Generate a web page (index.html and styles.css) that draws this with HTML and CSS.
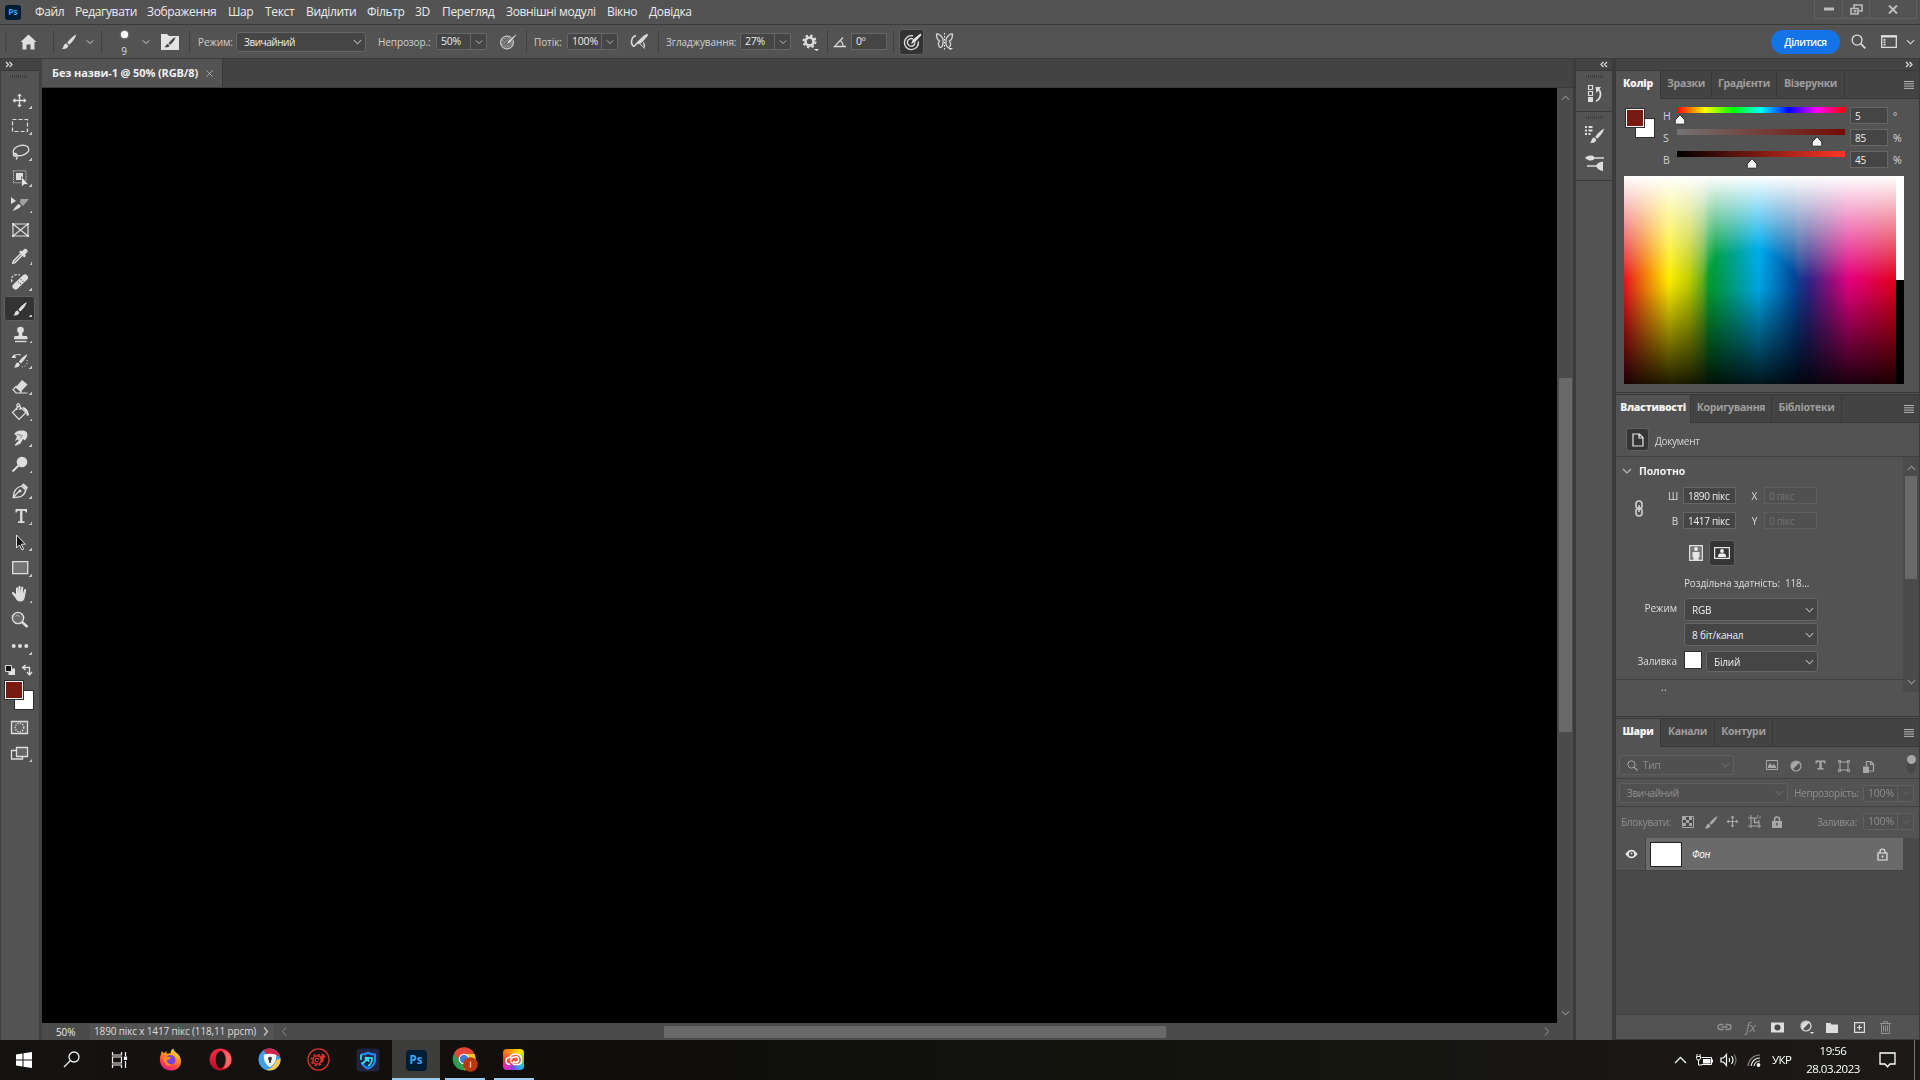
FILE: index.html
```html
<!DOCTYPE html>
<html lang="uk">
<head>
<meta charset="utf-8">
<title>Без назви-1 @ 50% (RGB/8)</title>
<link rel="stylesheet" href="styles.css">
</head>
<body>
<svg class="defs" width="0" height="0">
  <symbol id="chev" viewBox="0 0 10 6"><path d="M1 1l4 4 4-4" fill="none" stroke="currentColor" stroke-width="1.2"/></symbol>
  <symbol id="brush" viewBox="0 0 16 16"><path d="M15.3 1C12 2.500 8 6.500 6.300 9.300l1.800 1.900C11 9 14.500 4.500 15.300 1zM5.500 10c-2 .2-2.700 1.500-3 3-.2 1-.8 1.700-1.700 2.100 2.500.7 5.900.2 6.500-2.800z" fill="currentColor"/></symbol>
  <symbol id="move" viewBox="0 0 16 16"><path d="M8 .5l2.600 3H8.700v3.800h3.800V5.400l3 2.600-3 2.600V8.700H8.700v3.800h1.900L8 15.500l-2.600-3h1.900V8.700H3.500v1.900L.5 8l3-2.600v1.900h3.800V3.500H5.400z" fill="currentColor"/></symbol>
  <symbol id="hamb" viewBox="0 0 10 8"><path d="M0 .5h10M0 2.800h10M0 5.100h10M0 7.400h10" stroke="currentColor"/></symbol>
  <symbol id="adj" viewBox="0 0 12 12"><circle cx="6" cy="6" r="5" fill="none" stroke="currentColor" stroke-width="1.2"/><path d="M9.500 2.500A5 5 0 0 0 2.500 9.500z" fill="currentColor"/></symbol>
  <symbol id="lens" viewBox="0 0 16 16"><circle cx="6.500" cy="6.500" r="5.300" fill="none" stroke="currentColor" stroke-width="1.400"/><path d="M10.300 10.300l5 5" stroke="currentColor" stroke-width="1.800"/></symbol>
  <symbol id="handle" viewBox="0 0 12 11"><path d="M6 .7L10.800 6v3.200q0 1-1 1H2.200q-1 0-1-1V6z" fill="#f4f4f4" stroke="#2b2b2b"/></symbol>
</svg>

<div class="app">
  <header class="menubar">
    <span class="ps-badge">Ps</span>
    <span>Файл</span><span>Редагувати</span><span>Зображення</span><span>Шар</span><span>Текст</span><span>Виділити</span><span>Фільтр</span><span>3D</span><span>Перегляд</span><span>Зовнішні модулі</span><span>Вікно</span><span>Довідка</span>
    <div class="winbtns">
      <i><svg width="10" height="4"><path d="M0 2h10" stroke="#bdbdbd" stroke-width="3"/></svg></i>
      <i><svg width="13" height="11" fill="none" stroke="#bdbdbd" stroke-width="1.600"><path d="M4 4V1h8v6H9"/><path d="M1 4.500h7V10H1z"/><path d="M4 6.500h2v1.500H4z" stroke-width="1"/></svg></i>
      <i><svg width="10" height="9"><path d="M1 .5l8 8M9 .5l-8 8" stroke="#bdbdbd" stroke-width="2"/></svg></i>
    </div>
  </header>

  <div class="options">
    <i class="vgrip"></i>
    <svg class="ic" width="17" height="16"><path d="M8.500.5L16.500 8H14.500v7.500h-4v-5h-4v5h-4V8H.5z" fill="#dedede"/></svg>
    <i class="sep"></i>
    <svg class="ic" width="16" height="17"><use href="#brush"/></svg>
    <svg class="ic chev" width="8" height="6"><use href="#chev"/></svg>
    <i class="sep"></i>
    <div class="tip"><b></b><span>9</span></div>
    <svg class="ic chev" width="8" height="6"><use href="#chev"/></svg>
    <svg class="ic" width="18" height="17"><path d="M0 1h6l2 2h10v14H0z" fill="#e3e3e3"/><path d="M14.500 4C11.500 5.500 9 8 7.500 10.500l1.500 1.300C11.500 10 14 7 14.500 4zM6.700 11c-2 .3-1.700 2.500-3.200 3 2 .7 4.700.2 4.900-1.600z" fill="#444"/></svg>
    <i class="sep"></i>
    <label>Режим:</label>
    <div class="select">Звичайний<svg width="9" height="6"><use href="#chev"/></svg></div>
    <label>Непрозор.:</label>
    <div class="num"><span>50%</span><i><svg width="8" height="6"><use href="#chev"/></svg></i></div>
    <svg class="ic" width="18" height="17"><circle cx="8" cy="9.500" r="6.500" fill="#898989" stroke="#d8d8d8"/><path d="M4 6l8 7M3 9l6 6M6 4l6 6M4 13l8-8M3 10l6-6" stroke="#555" stroke-width=".8"/><path d="M17 1l-8 7-1.500 3.500L11 10l6.500-8z" fill="#e3e3e3" stroke="#535353" stroke-width=".7"/></svg>
    <i class="sep"></i>
    <label>Потік:</label>
    <div class="num"><span>100%</span><i><svg width="8" height="6"><use href="#chev"/></svg></i></div>
    <svg class="ic" width="18" height="17"><path d="M6 2.500C1 4 0 11 4 13.500M4 13.500C7 10 11 6 15 2.500" fill="none" stroke="#d8d8d8" stroke-width="1.600"/><path d="M17 1L9.500 7.500 8 11l3.500-1.500 6-7zM10 11l5 4.500M13 9.500c2 1 2 3 1 5" fill="#d8d8d8" stroke="#d8d8d8" stroke-width="1"/></svg>
    <i class="sep"></i>
    <label>Згладжування:</label>
    <div class="num"><span>27%</span><i><svg width="8" height="6"><use href="#chev"/></svg></i></div>
    <svg class="ic" width="18" height="20"><circle cx="7.500" cy="9.500" r="4" fill="none" stroke="#dedede" stroke-width="2.600"/><circle cx="7.500" cy="9.500" r="6" fill="none" stroke="#dedede" stroke-width="2" stroke-dasharray="2.400 2.312"/><path d="M12 17h5l-2.500 2z" fill="#eee"/></svg>
    <i class="sep"></i>
    <svg class="ic" width="14" height="12"><path d="M10 1.500L1.500 10.500H13M7 4.500c2 1 3 3 3 6" fill="none" stroke="#d6d6d6" stroke-width="1.300"/></svg>
    <div class="num plain"><span>0º</span></div>
    <i class="sep"></i>
    <div class="press"><svg width="20" height="20"><path d="M11 3.800a7 7 0 1 0 5.300 5.500M11 7a3.800 3.800 0 1 0 2 3.500" fill="none" stroke="#dedede" stroke-width="1.400"/><path d="M18.500 1.500l-7.500 6-2 4.500 4-2 6.500-7z" fill="#e8e8e8"/></svg></div>
    <svg class="ic" width="20" height="19"><path d="M8 7C6 3 3 1.500 1.500 2c0 3 1 6 3 7-2 2-1 6 1 6.500C7 15 8 13 8 11zM11 7c2-4 5-5.500 6.500-5 0 3-1 6-3 7 2 2 1 6-1 6.500C12 15 11 13 11 11z" fill="none" stroke="#d6d6d6" stroke-width="1.300"/><path d="M9.500 1v17" stroke="#eee" stroke-dasharray="1.500 1.500"/><path d="M13 16h5l-2.500 2z" fill="#eee"/></svg>
    <button class="share">Ділитися</button>
    <svg class="ic" width="15" height="15"><use href="#lens"/></svg>
    <svg class="ic" width="16" height="13" fill="none" stroke="#dedede"><path d="M.7 1h14.600v11.300H.7z" stroke-width="1.300"/><path d="M0 1.500h16" stroke-width="2"/><path d="M3.500 4v6.500" stroke-width="2" stroke-dasharray="1.700 .7"/></svg>
    <svg class="ic chev" width="9" height="6"><use href="#chev"/></svg>
  </div>

  <main class="work">
    <aside class="tools">
      <div class="strip"><svg width="8" height="7"><path d="M1 1l2.500 2.500L1 6M4.500 1L7 3.500 4.500 6" fill="none" stroke="#ddd" stroke-width="1.200"/></svg></div>
      <div class="grip"></div>
      <div class="toollist">
        <svg><use href="#move" x="10" y="5" width="15" height="15"/></svg>
        <svg><path d="M10.500 5.500h15v12h-15z" fill="none" stroke="#dedede" stroke-width="1.200" stroke-dasharray="4 2"/></svg>
        <svg><g fill="none" stroke="#dedede" stroke-width="1.300"><ellipse cx="19" cy="10.500" rx="8" ry="5" transform="rotate(-14 19 10.500)"/><path d="M12 13.500c2.500-.5 4 1.500 2 2.500s-3.500-1-2-2.500M15 15.500c.5 2 0 3-1 4"/></g></svg>
        <svg><path d="M11.500 4.800h12.500v12H11.500z" fill="none" stroke="#dedede" stroke-dasharray="1 1"/><path d="M14 7h7v5l-1 2h-6z" fill="#dedede"/><path d="M19.500 10.500v10.500l2.500-2.500h4.500z" fill="#e6e6e6" stroke="#535353" stroke-width=".7"/></svg>
        <svg><path d="M9 5l5 4-5 3z" fill="#dedede"/><path d="M10 19c2-1 3-5 7-7l2 2c-2 3-6 4-9 5z" fill="#dedede"/><path d="M18.500 7H27l-6 7-3-3z" fill="#a0a0a0"/></svg>
        <svg class="nc"><path d="M11 6h15v12H11zM11 6l15 12M26 6L11 18" fill="none" stroke="#dedede" stroke-width="1.200"/><path d="M10 5h2v2h-2zM25 5h2v2h-2zM10 17h2v2h-2zM25 17h2v2h-2z" fill="#dedede"/></svg>
        <svg><path d="M19 9.500l-7.500 7.500-.7 2.200 2.200-.7L20.500 11" fill="none" stroke="#dedede" stroke-width="1.500"/><path d="M17 8l1.500-1.500 1.700.8 2-2.300c1.500-1 4.200 1 3.300 3l-2.400 2.200.8 1.800-1.700 1.500z" fill="#dedede"/></svg>
        <svg><path d="M13.500 16.500L23 7.500" stroke="#dedede" stroke-width="6" stroke-linecap="round"/><path d="M16 11.500l5 4M18.500 9l4 4" stroke="#535353" stroke-width="1" stroke-dasharray="1.500 1"/><path d="M10 12C8 6 13 3.500 18 5" fill="none" stroke="#dedede" stroke-width="1.200" stroke-dasharray="2.500 1.500"/></svg>
        <svg class="on"><use href="#brush" x="8.500" y="4.500" width="15" height="16"/></svg>
        <svg><circle cx="18.500" cy="8" r="3.300" fill="#dedede"/><path d="M17 10h3l.5 4h4q1 0 1 3.300H12q0-3.300 1-3.300h3.500z" fill="#dedede"/><path d="M13 19.500h11.500" stroke="#dedede" stroke-width="1.300"/></svg>
        <svg><use href="#brush" x="11" y="4.500" width="15" height="16"/><path d="M10 9c3-2.500 6-3 9-2" fill="none" stroke="#dedede"/><path d="M9.500 10l3-4 1.500 4z" fill="#dedede"/><path d="M25 12c1 4-2 7-6 7" fill="none" stroke="#dedede" stroke-dasharray="1 2"/></svg>
        <svg><path d="M20 6l5.500 4.500-7 7.500-5-4.500z" fill="#dedede"/><path d="M14.500 12l-3.500 3.500 3 3.500h4l1.500-2M14 19h11.500" fill="none" stroke="#dedede" stroke-width="1.200"/></svg>
        <svg><path d="M17 6l-6.500 6.500 6.500 7 7-7zM15 10V4.500q2-2 3 1V10" fill="none" stroke="#dedede" stroke-width="1.200"/><path d="M20 7c4 0 6 3 7 7.500-.5 2-3 1.500-2.500-.5 0-2-1-3-2-3.500z" fill="#dedede"/></svg>
        <svg><path d="M12.500 8c1-3 5-3.500 7.500-3.500 4 0 6 2 5.300 6-.3 1.500-1.500 2.500-2.300 4L21 13l-2.500 4.500-4.500 2.300-1.500-.5L17 14l-1.500-.5-2.500 1.500 2-4.500z" fill="#dedede"/><path d="M15 8.500l4.500 1M18 12.500l2.500-3" stroke="#666" stroke-width=".8"/></svg>
        <svg><circle cx="20" cy="10" r="5.300" fill="#dedede"/><path d="M16.500 13.500L10.500 19.500" stroke="#dedede" stroke-width="2"/></svg>
        <svg><path d="M11.300 19.500c0-5 1-9.500 8-11.500l4.500 4c-1.500 6-5 7.500-12.500 7.500zM11.500 19l6-6" fill="none" stroke="#dedede" stroke-width="1.300"/><circle cx="18" cy="13" r="1.400" fill="#dedede"/><path d="M19.500 7l2-1.800L26 9.500l-1.500 2.300z" fill="#dedede"/></svg>
        <svg><path d="M13.500 5h11.500v3.500h-1.200q-.3-1.800-1.500-1.800h-1.900v10.500h2.100V19H16v-1.800h2.100V6.700h-1.900q-1.200 0-1.500 1.800h-1.200z" fill="#dedede"/></svg>
        <svg><path d="M14.500 5v13l3-3 2.500 5 1.700-.8-2.400-5h4z" fill="#151515" stroke="#e3e3e3"/></svg>
        <svg><path d="M10.700 5.700h15v12h-15z" fill="#757575" stroke="#dedede" stroke-width="1.300"/></svg>
        <svg><path d="M13.500 16L10 11.500c-.5-1.500 1-2 2-1l2 1.800V6q1.200-1.500 2 0v4.500l.5-6q1-1.300 2 0v6l.8-5.500q1-1 1.900.2l-.3 6 1.500-4q1.400-.7 1.800.6L23 14c-.5 4-2 5.500-4.500 5.500S14.500 18.500 13.500 16z" fill="#dedede"/></svg>
        <svg class="nc"><circle cx="16" cy="10" r="5.600" fill="#6b6b6b" stroke="#dedede" stroke-width="1.400"/><path d="M20 14l5.500 5" stroke="#dedede" stroke-width="2.400"/><path d="M13 8.500q2-2.500 5 0" fill="none" stroke="#aaa"/></svg>
        <svg><g fill="#dedede"><circle cx="11.700" cy="12" r="2"/><circle cx="18" cy="12" r="2"/><circle cx="24.300" cy="12" r="2"/></g></svg>
      </div>
      <svg class="swap" width="36" height="16"><path d="M6.500 8.500h6.500v6.500H6.500z" fill="#e3e3e3"/><path d="M3.500 5.500h6v6h-6z" fill="#151515" stroke="#d8d8d8"/><path d="M21 7.500h6.500V14M23.500 5L20.500 7.500l3 2.500M25 12l2.500 3 2.500-3" fill="none" stroke="#dedede" stroke-width="1.300"/></svg>
      <div class="duo"><i class="bgc"></i><i class="fgc"></i></div>
      <svg class="qm" width="36" height="52" fill="none" stroke="#dedede" stroke-width="1.300"><path d="M9.500 9.500h16v12h-16z" fill="#666"/><circle cx="17.500" cy="15.500" r="4.300" stroke-dasharray="1.300 1.200"/><path d="M14.500 38.500H9.500v8.500h11v-2.500" /><path d="M14.500 35.500h11v9h-11z" fill="#666"/><path d="M30 47v3h-3z" fill="#c4c4c4" stroke="none"/></svg>
    </aside>

    <section class="doc">
      <div class="tabs"><div class="doctab">Без назви-1 @ 50% (RGB/8)<svg width="7" height="7"><path d="M.5.5l6 6M6.500.5l-6 6" stroke="#aaa"/></svg></div></div>
      <div class="canvas-row">
        <div class="canvas"></div>
        <div class="vscroll"><svg class="up" width="9" height="6"><use href="#chev"/></svg><i></i><svg width="9" height="6"><use href="#chev"/></svg></div>
      </div>
      <div class="status">
        <span class="zoom">50%</span>
        <span class="info">1890 пікс x 1417 пікс (118,11 ppcm)<svg width="6" height="9"><path d="M1 .5l3.500 4L1 8.500" fill="none" stroke="#ccc" stroke-width="1.200"/></svg></span>
        <svg class="l" width="6" height="9"><path d="M5 .5L1.500 4.500 5 8.500" fill="none" stroke="#8b8b8b"/></svg>
        <i class="hthumb"></i>
        <svg width="6" height="9"><path d="M1 .5l3.500 4L1 8.500" fill="none" stroke="#999"/></svg>
      </div>
    </section>

    <aside class="dock">
      <div class="strip r"><svg width="8" height="7"><path d="M3.500 1L1 3.500 3.500 6M7 1L4.500 3.500 7 6" fill="none" stroke="#ddd" stroke-width="1.200"/></svg></div>
      <div class="dockbox a"><div class="grip"></div>
        <svg width="16" height="18"><path d="M1.500 1.500h4v4h-4zM1.500 7.500h4v4h-4z" fill="none" stroke="#dedede" stroke-width="1.200"/><path d="M1 13h5v5H1z" fill="#dedede"/><path d="M9 17c5-2 6-9 2-12" fill="none" stroke="#dedede" stroke-width="1.800"/><path d="M8.500 3h5.500l-4.500 6z" fill="#dedede"/></svg>
      </div>
      <div class="dockbox b"><div class="grip"></div>
        <svg width="22" height="18"><path d="M1 1h2M4.500 1h4M1 4.500h2M4.500 4.500h4M1 8h2M4.500 8h2" stroke="#dedede" stroke-width="1.800"/><use href="#brush" x="4.500" y="1.500" width="17" height="16"/></svg>
        <svg width="22" height="18"><path d="M9 4h11M3 12h11" stroke="#dedede" stroke-width="1.500"/><path d="M1 4c3-3 7-3 9-1.500v3C7 7.500 4 6.500 1 4zM12 12c1-3 4-4 7-4.500v9.500c-3-.5-6-2-7-5z" fill="#dedede"/></svg>
      </div>
      <div class="dockfill"></div>
    </aside>

    <aside class="panels">
      <div class="strip r"><svg width="8" height="7"><path d="M1 1l2.500 2.500L1 6M4.500 1L7 3.500 4.500 6" fill="none" stroke="#ddd" stroke-width="1.200"/></svg></div>

      <section class="panel color">
        <nav class="ptabs t1"><b>Колір</b><span>Зразки</span><span>Градієнти</span><span>Візерунки</span><svg width="10" height="8"><use href="#hamb"/></svg></nav>
        <div class="hsb">
          <div class="duo"><i class="bgc"></i><i class="fgc"></i></div>
          <div class="sliders">
            <label>H</label><div class="bar h"><svg class="h1" width="12" height="11"><use href="#handle"/></svg></div><span class="val">5</span><em>º</em>
            <label>S</label><div class="bar s"><svg class="h2" width="12" height="11"><use href="#handle"/></svg></div><span class="val">85</span><em>%</em>
            <label>B</label><div class="bar b"><svg class="h3" width="12" height="11"><use href="#handle"/></svg></div><span class="val">45</span><em>%</em>
          </div>
        </div>
        <div class="ramp"><canvas id="ramp" width="272" height="208"></canvas><i></i></div>
      </section>

      <section class="panel props">
        <nav class="ptabs t2"><b>Властивості</b><span>Коригування</span><span>Бібліотеки</span><svg width="10" height="8"><use href="#hamb"/></svg></nav>
        <div class="dochead"><i><svg width="12" height="14"><path d="M1 1h6.500L11 4.500V13H1zM7 1v4h4" fill="none" stroke="#e6e6e6" stroke-width="1.200"/></svg></i><span>Документ</span></div>
        <div class="pbody">
          <div class="pleft">
            <div class="sect"><svg width="10" height="6"><use href="#chev"/></svg>Полотно</div>
            <div class="size">
              <svg class="link" width="10" height="17" fill="none" stroke="#d0d0d0" stroke-width="1.600"><path d="M2 6.500V4q0-3 3-3t3 3v2.500q0 1.500-1.500 1.500h-3Q2 8 2 6.500zM2 10.500V13q0 3 3 3t3-3v-2.500Q8 9 6.500 9h-3Q2 9 2 10.500z"/><path d="M5 5v7"/></svg>
              <label>Ш</label><span class="val">1890 пікс</span><label class="pos">X</label><span class="val off">0 пікс</span>
              <label>В</label><span class="val">1417 пікс</span><label class="pos">Y</label><span class="val off">0 пікс</span>
            </div>
            <div class="orient">
              <svg width="14" height="16"><path d="M.6.6h12.800v14.800H.6z" fill="#777" stroke="#dedede" stroke-width="1.200"/><circle cx="7" cy="4" r="1.900" fill="#eee"/><path d="M3.500 7h7v5l-1 .5V15h-5v-2.500l-1-.5z" fill="#e6e6e6"/></svg>
              <i><svg width="16" height="12"><path d="M.6.6h14.800v10.800H.6z" fill="none" stroke="#e6e6e6" stroke-width="1.200"/><circle cx="8" cy="4" r="1.900" fill="#eee"/><path d="M4 10q0-3.500 2-3.500h4q2 0 2 3.500z" fill="#eee"/></svg></i>
            </div>
            <div class="res">Роздільна здатність:<span>118...</span></div>
            <div class="form">
              <label>Режим</label><div class="select w">RGB<svg width="9" height="6"><use href="#chev"/></svg></div>
              <div class="select w">8 біт/канал<svg width="9" height="6"><use href="#chev"/></svg></div>
              <label class="fill">Заливка</label><i class="white"></i><div class="select f">Білий<svg width="9" height="6"><use href="#chev"/></svg></div>
            </div>
            <div class="cut">..</div>
          </div>
          <div class="pscroll"><svg class="up" width="9" height="6"><use href="#chev"/></svg><i></i><svg width="9" height="6"><use href="#chev"/></svg></div>
        </div>
      </section>

      <section class="panel layers">
        <nav class="ptabs t3"><b>Шари</b><span>Канали</span><span>Контури</span><svg width="10" height="8"><use href="#hamb"/></svg></nav>
        <div class="filter">
          <div class="select dim"><svg class="q" width="11" height="11"><use href="#lens"/></svg>Тип<svg width="9" height="6"><use href="#chev"/></svg></div>
          <svg width="12" height="10"><path d="M.5.5h11v9H.5z" fill="none" stroke="#a8a8a8"/><path d="M2 8V6l2-3 2 3 1.500-2L10 6.500V8z" fill="#a8a8a8"/></svg>
          <svg width="12" height="12"><use href="#adj"/></svg>
          <svg width="11" height="10"><path d="M.5.5h10v3H9.300Q9 2 8 2H6.700v6h1.800v1.500h-6V8h1.800V2H3Q2 2 1.700 3.500H.5z" fill="#a8a8a8"/></svg>
          <svg width="12" height="12" fill="none" stroke="#a8a8a8"><path d="M2 2h8v8H2z"/><path d="M.5.500h2v2h-2zM9.500.5h2v2h-2zM.5 9.500h2v2h-2zM9.500 9.500h2v2h-2z"/></svg>
          <svg width="12" height="13"><path d="M3.500 6V1.500h4.500L10.500 4v7H6M7.500 1.500v3h3" fill="none" stroke="#a8a8a8" stroke-width="1.200"/><path d="M0 6.500h6V13H0z" fill="#a8a8a8"/></svg>
          <div class="toggle"><i></i></div>
        </div>
        <div class="blend">
          <div class="select dim">Звичайний<svg width="9" height="6"><use href="#chev"/></svg></div>
          <label>Непрозорість:</label>
          <div class="num dim"><span>100%</span><i><svg width="8" height="6"><use href="#chev"/></svg></i></div>
        </div>
        <div class="lock">
          <label>Блокувати:</label>
          <svg width="12" height="12"><path d="M.5.500h11v11H.5z" fill="#4a4a4a" stroke="#a8a8a8"/><path d="M1 1h3v3H1zM7 1h3v3H7zM4 4h3v3H4zM1 7h3v3H1zM7 7h3v3H7z" fill="#a8a8a8"/></svg>
          <svg width="14" height="14"><use href="#brush"/></svg>
          <svg width="13" height="13"><use href="#move"/></svg>
          <svg width="14" height="13"><path d="M0 3h10M3 0v13M0 11h13M11 5v8M10 0v2M11 3l2-1" fill="none" stroke="#a8a8a8"/><path d="M6.500 3v4.500H11" fill="none" stroke="#a8a8a8" stroke-width="1.400"/></svg>
          <svg width="10" height="12"><path d="M2.500 5V3.500q0-2.500 2.500-2.500t2.500 2.500V5" fill="none" stroke="#a8a8a8" stroke-width="1.500"/><path d="M0 5h10v7H0z" fill="#a8a8a8"/><path d="M5 7v2.500" stroke="#555" stroke-width="1.500"/></svg>
          <label>Заливка:</label>
          <div class="num dim"><span>100%</span><i><svg width="8" height="6"><use href="#chev"/></svg></i></div>
        </div>
        <div class="list">
          <div class="layer">
            <div class="eye"><svg width="13" height="10"><path d="M.3 5q6.200-8.500 12.400 0-6.200 8.500-12.400 0z" fill="#e6e6e6"/><circle cx="6.500" cy="5" r="2.600" fill="#484848"/><circle cx="6.500" cy="4.500" r="1" fill="#e6e6e6"/></svg></div>
            <div class="row"><i></i><em>Фон</em><svg width="11" height="13"><path d="M3 5V3.500q0-2.500 2.500-2.500T8 3.500V5M1 5h9v7H1z" fill="none" stroke="#e6e6e6" stroke-width="1.200"/><path d="M5.500 7.500v2" stroke="#e6e6e6" stroke-width="1.500"/></svg></div>
          </div>
        </div>
        <div class="foot">
          <svg width="15" height="8" fill="none" stroke="#929292" stroke-width="1.400"><path d="M6.500 1.500h-3q-2.500 0-2.500 2.500t2.500 2.500h3M8.500 1.500h3q2.500 0 2.500 2.500t-2.500 2.500h-3M4.500 4h6"/></svg>
          <span class="fx">fx</span>
          <svg width="13" height="11"><path d="M0 .5h13v10H0z" fill="#dedede"/><circle cx="6.500" cy="5.500" r="3" fill="#484848"/></svg>
          <svg width="14" height="14"><use href="#adj" width="12" height="12"/><path d="M10 12h4l-2 2z" fill="#eee"/></svg>
          <svg width="12" height="11"><path d="M0 1h4.500l1 1.500H12V11H0z" fill="#dedede"/></svg>
          <svg width="11" height="11" fill="none" stroke="#dedede"><path d="M.6.600h9.800v9.800H.6z" stroke-width="1.200"/><path d="M5.500 3v5M3 5.500h5" stroke-width="1.200"/></svg>
          <svg width="11" height="13" fill="none" stroke="#929292"><path d="M0 2.500h11M3.500 2V.7h4V2M1.500 3v9.500h8V3M3.500 4.500v6M5.500 4.500v6M7.500 4.500v6"/></svg>
        </div>
      </section>
    </aside>
  </main>
</div>

<footer class="taskbar">
  <div class="tk"><svg width="16" height="16" fill="#fff"><path d="M0 2.500l6.500-1v6H0zM7.500 1.300L16 0v7.500H7.500zM0 8.500h6.500v6L0 13.500zM7.500 8.500H16V16l-8.500-1.300z"/></svg></div>
  <div class="tk"><svg width="18" height="17" fill="none" stroke="#f0f0f0" stroke-width="1.300"><circle cx="11" cy="6" r="5"/><path d="M7.500 9.500L1 16"/></svg></div>
  <div class="tk"><svg width="17" height="16" fill="none" stroke="#f0f0f0" stroke-width="1.200"><path d="M1.500 0v3h9V0M1.500 5h9v6h-9zM1.500 16v-3h9v3M14.500 0v4M14.500 9v7"/><path d="M13.500 5h2v2.500h-2z" fill="#fff"/></svg></div>
  <div class="tk"><svg width="23" height="23" viewBox="0 0 24 24"><defs><linearGradient id="ff" x1=".8" y1="0" x2=".3" y2="1"><stop offset="0" stop-color="#fff44f"/><stop offset=".35" stop-color="#ffa31a"/><stop offset=".7" stop-color="#ff4a3d"/><stop offset="1" stop-color="#e5178f"/></linearGradient></defs><path d="M1 13C.500 9 2 7 3 3l2 2.500 3-2v2.500l4-.5C12 3 13.500 1.500 15 .5c0 3 3 4 5 6 6 7 2.500 17-7.500 17C6 23.500 1.500 19 1 13z" fill="url(#ff)"/><circle cx="12" cy="12.500" r="5.300" fill="#7a3fe0"/><path d="M4 11q3-3 9-1-2 3-5 2.500Q9 18 15 17q-8 5-11-6z" fill="#ff8b25"/></svg></div>
  <div class="tk"><svg width="23" height="23" viewBox="0 0 24 24"><defs><linearGradient id="op" x2="0" y2="1"><stop stop-color="#ff2a45"/><stop offset="1" stop-color="#b60a24"/></linearGradient></defs><circle cx="12" cy="12" r="11.500" fill="url(#op)"/><path d="M14 2.500a9.500 9.500 0 0 1 0 19q4-3 4-9.500t-4-9.500z" fill="#ff6a66"/><ellipse cx="12" cy="12" rx="5" ry="9" fill="#14110e"/></svg></div>
  <div class="tk"><svg width="23" height="23" viewBox="0 0 24 24"><circle cx="12" cy="12" r="11.500" fill="#3f9fe8"/><path d="M6 2.200A11.500 11.500 0 0 1 23.500 12q-.500-4-5.500-5H9z" fill="#d3234a"/><path d="M23.500 11A11.500 11.500 0 0 1 8 22.700q8-1 11-10z" fill="#ffc845"/><path d="M6 7q6-2 13 0 .5 9-6.500 13Q5.500 16 6 7z" fill="#f5f5f5"/><circle cx="12.500" cy="11" r="2" fill="#333"/><path d="M11.500 11.500h2v4h-2z" fill="#333"/></svg></div>
  <div class="tk"><svg width="23" height="23" viewBox="0 0 24 24" fill="none" stroke="#d8342f"><circle cx="12" cy="12" r="11" stroke-width="1.300"/><circle cx="10.500" cy="12.500" r="4.300" stroke-width="1.500"/><circle cx="10.500" cy="12.500" r="5.700" stroke-width="1.800" stroke-dasharray="2.200 2.280"/><path d="M12.500 12.500a2 2 0 1 0-1 1.700" stroke-width="1.300"/><path d="M16.500 5.500l3.500 4.500h-2.300q0 4.500-3.200 6-.5-3 .5-6h-2z" fill="#d8342f" stroke="none"/></svg></div>
  <div class="tk"><svg width="24" height="24"><rect x=".5" y=".5" width="23" height="23" rx="4" fill="#232340"/><path d="M5 6.500q4 0 7-1.800 3 1.800 7 1.800v6.500q-1 5-7 7.500-5-2.500-6.500-6" fill="none" stroke="#2388f2" stroke-width="2.200"/><path d="M5 12V6.500M12 18q4-2 4-8l-7-.5M6 16l6-5.500M8.500 10.500H12.500V14" fill="none" stroke="#35e0e8" stroke-width="1.700"/></svg></div>
  <div class="tk act"><span class="ps-badge big">Ps</span></div>
  <div class="tk run"><svg width="26" height="25"><circle cx="12" cy="12" r="11.300" fill="#2f9e50"/><path d="M2 6.500A11.300 11.300 0 0 1 22.500 7H12l-5 6z" fill="#e3453a"/><path d="M22.500 7A11.300 11.300 0 0 1 12 23.300L16.500 14 14 7z" fill="#f7c52e"/><circle cx="12" cy="12" r="5.300" fill="#fff"/><circle cx="12" cy="12" r="4.200" fill="#3a7de0"/><circle cx="18.500" cy="17.500" r="7.300" fill="#b8390f"/><path d="M18.500 14.500v6" stroke="#e8c9bd" stroke-width="1.300"/></svg></div>
  <div class="tk run"><div class="cc"><svg width="18" height="13" viewBox="0 0 18 13"><path d="M5 11.500q-4 0-4-3.700T5 4.300Q6.500 1 10 1q6.500 0 6.700 5.500T12 11.500H9L5.500 8.500M8 8.500l3 1q3-.5 2.500-3.500T9.500 4q-3 0-4 3.500" fill="none" stroke="#fff" stroke-width="1.500"/></svg></div></div>
  <div class="tray">
    <svg width="13" height="8"><path d="M1 7l5.500-5.500L12 7" fill="none" stroke="#f0f0f0" stroke-width="1.400"/></svg>
    <svg width="17" height="13"><path d="M5.500 3.500h10v7h-10" fill="none" stroke="#fff"/><path d="M7 5h7.500v4.500H7z" fill="#fff"/><path d="M16.500 5.500v3M1 0v2.500M4 0v2.500M2.500 6v5H6" stroke="#fff" fill="none"/><path d="M.5 2.500h4v2l-1 1.500h-2l-1-1.500z" fill="none" stroke="#fff"/></svg>
    <svg width="17" height="14" fill="none" stroke="#fff" stroke-width="1.200"><path d="M1 5h2.500L6.500 1.500v11L3.500 9H1z"/><path d="M9 5q1.500 2 0 4M11.500 3q3 4 0 8"/><path d="M14 1.500q4 5.500 0 11" stroke="#777"/></svg>
    <svg width="14" height="14" fill="none" stroke="#eee" stroke-width="1.200"><path d="M1 13A12 12 0 0 1 13 2" stroke="#888"/><path d="M4 13a9 9 0 0 1 9-8M7 13a6 6 0 0 1 6-5"/><circle cx="11.500" cy="12" r="1.300" fill="#fff"/></svg>
    <span>УКР</span>
    <div class="clock"><span>19:56</span><span>28.03.2023</span></div>
    <svg width="17" height="16"><path d="M1 1h15v11H11l-2.500 2.800L6 12H1z" fill="none" stroke="#fff" stroke-width="1.300"/></svg>
    <i></i>
  </div>
</footer>
<script src="ramp.js"></script>
</body>
</html>
```
FILE: styles.css
```css
* { box-sizing: border-box; }
body { margin: 0; width: 1920px; height: 1080px; overflow: hidden; background: #535353; color: #dcdcdc; font: 10px/14px "Open Sans", "Noto Sans", sans-serif; display: flex; flex-direction: column; }
i, em { font-style: normal; display: block; }
svg { display: block; flex: none; }
.defs { position: absolute; }
.app { height: 1040px; display: flex; flex-direction: column; }

.menubar { height: 25px; border-bottom: 1px solid #3b3b3b; display: grid; grid-template-columns: 30px 40px 72px 81px 37px 41px 61px 48px 27px 64px 101px 42px 1fr 103px; padding: 0 3px 0 5px; align-items: center; font-size: 12px; letter-spacing: -.35px; color: #ececec; white-space: nowrap; }
.ps-badge { width: 16px; height: 15px; border-radius: 3px; background: #001d33; color: #37a5fb; font-weight: 700; font-size: 8.500px; line-height: 14px; text-align: center; letter-spacing: 0; }
.winbtns { height: 19px; align-self: start; display: grid; grid-template-columns: 28px 27px 46px; border: 1px solid #616161; border-top: 0; border-radius: 0 0 3px 3px; }
.winbtns i { display: grid; place-items: center; border-right: 1px solid #616161; }
.winbtns i:last-child { border: 0; }

.options { height: 34px; border-bottom: 1px solid #3b3b3b; display: grid; align-items: center; padding-left: 5px; letter-spacing: -.1px; white-space: nowrap;
 grid-template-columns: 15px 33px 8px 25px 15px 13px 28px 19px 28px 9px 38px 142px 58px 63px 27px 8px 33px 63px 28px 8px 74px 62px 25px 6px 18px 42px 6px 36px 836px 80px 30px 25px 14px; }
.vgrip { width: 2px; height: 20px; background: repeating-linear-gradient(#3f3f3f 0 1px, transparent 1px 2px); }
.sep { width: 1px; height: 23px; background: #414141; }
.chev { color: #bcbcbc; }
.ic { color: #dedede; }
.options label { color: #cfcfcf; }
.tip { width: 20px; height: 31px; display: flex; flex-direction: column; align-items: center; justify-content: space-between; padding-top: 5px; }
.tip b { width: 7px; height: 7px; border-radius: 50%; background: #fff; box-shadow: 0 0 2px #eee; }
.tip span { line-height: 12px; }
.select { height: 20px; border: 1px solid #666; border-radius: 3px; background: #454545; color: #eee; display: flex; align-items: center; justify-content: space-between; padding: 0 3px 0 7px; letter-spacing: -.2px; }
.select svg { color: #b5b5b5; }
.options .select { width: 130px; letter-spacing: -.45px; }
.num { width: 51px; height: 17px; border: 1px solid #666; border-radius: 2px; background: #454545; color: #eee; display: flex; font-size: 10.500px; letter-spacing: -.2px; }
.num span { flex: 1; padding-left: 4px; line-height: 15px; }
.num i { width: 16px; border-left: 1px solid #666; display: grid; place-items: center; color: #bbb; }
.num.plain { width: 36px; border-radius: 0; }
.press { width: 25px; height: 26px; background: #333; border: 1px solid #606060; border-radius: 3px; display: grid; place-items: center; }
.share { justify-self: start; width: 69px; height: 24px; border: 0; border-radius: 12px; background: #1473e6; color: #fff; font: 600 10px/22px "Open Sans", sans-serif; padding: 0; letter-spacing: -.4px; }

.work { flex: 1; display: grid; grid-template-columns: 42px 1533px 40px 305px; min-height: 0; }
.strip { height: 12px; background: #434343; border-bottom: 1px solid #383838; display: flex; align-items: center; padding: 0 5px 0 4px; }
.strip.r { justify-content: flex-end; padding-right: 6px; }
.tools { display: flex; flex-direction: column; border-left: 1px solid #404040; border-right: 3px solid #424242; }
.tools .grip { margin: 4px 0 10px 9px; }
.grip { width: 18px; height: 3px; background: repeating-linear-gradient(90deg, #3f3f3f 0 1px, transparent 1px 2px); }
.toollist { display: flex; flex-direction: column; color: #dedede; padding-left: 1px; }
.toollist svg { width: 36px; height: 26px; background: linear-gradient(135deg, transparent 50%, #c4c4c4 50%) 27px 18px / 3px 3px no-repeat; }
.toollist svg.nc { background: none; }
.toollist svg.on { width: 31px; height: 25px; margin: 0 0 1px 2px; background-color: #333; background-position: 25px 18px; border-radius: 3px; outline: 1px solid #5f5f5f; outline-offset: -1px; }
.swap { margin-left: 1px; }
.duo { width: 30px; height: 30px; display: grid; grid-template: 20px 10px / 20px 10px; }
.duo i { width: 20px; height: 20px; border: 1px solid #2e2e2e; grid-area: 1 / 1; }
.duo .bgc { background: #fff; margin: 10px 0 0 10px; }
.duo .fgc { background: #781a12; box-shadow: inset 0 0 0 1px #f3f3f3; }
.tools .duo { margin: 4px 0 2px 3px; }
.qm { margin-left: 1px; }

.doc { display: flex; flex-direction: column; min-width: 0; border-right: 2px solid #3b3b3b; }
.tabs { height: 29px; background: #434343; border-bottom: 1px solid #3b3b3b; display: flex; }
.doctab { width: 181px; background: #535353; border-right: 1px solid #383838; display: flex; align-items: center; gap: 8px; padding-left: 10px; font-size: 11px; font-weight: 700; color: #f0f0f0; letter-spacing: -.12px; white-space: nowrap; }
.canvas-row { flex: 1; display: flex; }
.canvas { width: 1515px; background: #000; }
.vscroll { flex: 1; background: #4b4b4b; display: flex; flex-direction: column; align-items: center; color: #8f8f8f; padding: 7px 0; }
.vscroll i { width: 13px; height: 354px; margin: 277px 0 278px; background: #696969; }
.up { transform: rotate(180deg); }
.status { height: 17px; background: #4b4b4b; display: flex; align-items: center; letter-spacing: -.15px; white-space: nowrap; }
.zoom { width: 48px; padding-left: 14px; color: #eee; }
.info { width: 184px; height: 16px; line-height: 15px; background: #535353; padding: 0 5px 0 4px; display: flex; align-items: center; justify-content: space-between; }
.l { margin-left: 7px; }
.hthumb { width: 502px; height: 12px; background: #696969; margin: 0 378px 0 377px; }

.dock { border-left: 1px solid #3b3b3b; border-right: 3px solid #3b3b3b; display: flex; flex-direction: column; }
.dock .strip { padding-right: 4px; }
.dockbox { display: flex; flex-direction: column; align-items: center; border-bottom: 1px solid #3b3b3b; padding: 4px 0 0 2px; }
.dockbox .grip { margin-bottom: 6px; }
.dockbox.a { height: 41px; }
.dockbox.b { height: 69px; gap: 10px; }
.dockbox.b .grip { margin-bottom: -3px; }
.dockfill { flex: 1; }

.panels { display: flex; flex-direction: column; border: 1px solid #3b3b3b; border-top: 0; letter-spacing: -.3px; }
.panel { display: flex; flex-direction: column; }
.ptabs { height: 28px; background: #434343; border-bottom: 1px solid #383838; display: grid; align-items: stretch; font-size: 10.500px; font-weight: 700; font-stretch: 93%; letter-spacing: -.3px; line-height: 25px; color: #9e9e9e; }
.t1 { grid-template-columns: 45px 51px 65px 68px 1fr 15px; }
.t2 { grid-template-columns: 75px 81px 70px 1fr 15px; }
.t3 { grid-template-columns: 45px 54px 58px 1fr 15px; }
.ptabs b { background: #535353; color: #f2f2f2; margin-bottom: -1px; text-align: center; border-right: 1px solid #383838; }
.ptabs span { text-align: center; border-right: 1px solid #383838; }
.ptabs svg { grid-column: -2; align-self: center; color: #b5b5b5; }
.color { height: 322px; border-bottom: 1px solid #383838; }
.hsb { display: flex; height: 77px; padding: 8px 0 0 9px; }
.hsb .duo { margin-top: 1px; }
.sliders { display: grid; grid-template-columns: 14px 173px 43px 1fr; grid-auto-rows: 22px; margin-left: 8px; }
.sliders label { font-size: 10.500px; line-height: 19px; color: #d0d0d0; }
.val { height: 17px; border: 1px solid #666; background: #454545; color: #eee; padding-left: 4px; line-height: 17px; white-space: nowrap; }
.sliders .val { width: 38px; }
.sliders em { line-height: 18px; font-size: 10.500px; }
.bar { width: 168px; height: 6px; }
.bar svg { transform: translateY(7px); }
.bar.h { background: linear-gradient(90deg, #f00, #ff0 16.6%, #0f0 33.300%, #0ff 50%, #00f 66.600%, #f0f 83.300%, #f00); }
.bar.s { background: linear-gradient(90deg, #737373, #730a00); }
.bar.b { background: linear-gradient(90deg, #000, #ff3626); }
.h1 { margin-left: -3px; }
.h2 { margin-left: 134px; }
.h3 { margin-left: 69px; }
.ramp { margin-left: 8px; height: 208px; display: flex; }
.ramp i { width: 8px; background: linear-gradient(#fff 50%, #000 50%); }

.props { height: 323px; border-top: 1px solid #383838; border-bottom: 1px solid #383838; margin-top: 1px; }
.dochead { height: 34px; display: flex; align-items: center; gap: 6px; padding-left: 10px; border-bottom: 1px solid #404040; color: #d6d6d6; }
.dochead span { padding-top: 2px; }
.dochead i { width: 23px; height: 23px; background: #353535; border: 1px solid #606060; border-radius: 3px; display: grid; place-items: center; }
.pbody { height: 235px; display: flex; }
.pleft { width: 287px; }
.sect { height: 30px; display: flex; align-items: center; gap: 7px; padding: 0 0 2px 6px; font-size: 10.500px; font-weight: 700; color: #f0f0f0; letter-spacing: -.1px; }
.sect svg { color: #bbb; }
.size { display: grid; grid-template-columns: 27px 22px 53px 28px 53px; grid-auto-rows: 17px; row-gap: 8px; padding-left: 18px; }
.size label { line-height: 19px; text-align: right; padding-right: 5px; }
.size .pos { padding-right: 7px; }
.link { grid-row: 1 / 3; align-self: center; }
.val.off { color: #747474; border-color: #5e5e5e; background: #505050; }
.orient { display: flex; height: 26px; align-items: center; gap: 6px; margin: 11px 0 0 73px; }
.orient i { width: 26px; height: 26px; background: #353535; border: 1px solid #606060; border-radius: 3px; display: grid; place-items: center; }
.res { padding-left: 68px; height: 32px; line-height: 34px; letter-spacing: -.15px; }
.res span { margin-left: 5px; }
.form { display: grid; grid-template-columns: 61px 22px 112px; padding-left: 7px; row-gap: 2px; }
.form label { text-align: right; padding-right: 7px; line-height: 20px; letter-spacing: -.05px; }
.form .fill { padding-top: 3px; }
.form .select { height: 23px; }
.form .w { grid-column: 2 / 4; }
.form .select.f { height: 21px; margin-top: 3px; }
.form .white { width: 18px; height: 18px; background: #fff; border: 1px solid #2e2e2e; margin-top: 3px; }
.cut { border-top: 1px solid #404040; margin-top: 7px; padding-left: 45px; height: 14px; line-height: 14px; letter-spacing: .3px; }
.pscroll { width: 16px; background: #4b4b4b; display: flex; flex-direction: column; align-items: center; padding: 8px 0 7px; justify-content: space-between; color: #999; }
.pscroll i { width: 12px; height: 103px; background: #696969; margin-bottom: 96px; }

.layers { flex: 1; margin-top: 1px; border-top: 1px solid #383838; min-height: 0; }
.filter, .blend, .lock { display: grid; align-items: center; padding-left: 3px; color: #8f8f8f; white-space: nowrap; }
.filter { height: 32px; border-bottom: 1px solid #404040; grid-template-columns: 147px 24px 25px 23px 25px 44px 1fr; color: #a8a8a8; padding-top: 8px; align-items: start; }
.filter > svg { margin-top: 5px; }
.filter .select { width: 115px; }
.filter .select .q { color: #a8a8a8; margin-right: 5px; }
.filter .select svg:last-child { margin-left: auto; }
.dim { background: #505050; border-color: #606060; color: #8f8f8f; }
.dim svg { color: #6b6b6b; }
.toggle { width: 9px; height: 18px; border-radius: 5px; background: #484848; }
.toggle i { width: 9px; height: 9px; border-radius: 50%; background: #a8a8a8; }
.blend { height: 28px; border-bottom: 1px solid #404040; grid-template-columns: 175px 69px 51px; padding-top: 1px; }
.blend .select { width: 169px; letter-spacing: -.35px; }
.num.dim i { border-color: #606060; color: #777; }
.lock { height: 31px; grid-template-columns: 61px 22px 22px 22px 24px 45px 48px 51px; padding: 0 0 2px 5px; }
.lock svg { color: #a8a8a8; }
.lock .num { margin-left: -2px; }
.lock .num svg { color: #6b6b6b; }
.list { flex: 1; background: #494949; }
.layer { height: 33px; display: flex; background: #535353; border-bottom: 1px solid #424242; width: 287px; }
.eye { width: 30px; border-right: 1px solid #424242; display: grid; place-items: center; padding-left: 1px; }
.row { flex: 1; background: #6a6a6a; display: flex; align-items: center; padding: 0 15px 0 4px; }
.row i { width: 32px; height: 25px; background: #fff; border: 1px solid #222; margin-right: 10px; }
.row em { font-style: italic; color: #fff; flex: 1; }
.foot { height: 25px; border-top: 1px solid #404040; display: grid; grid-template-columns: 29px 25px 29px 26px 28px 26px 1fr; align-items: center; padding-left: 101px; }
.fx { font: italic 13px/16px "Open Sans", sans-serif; color: #929292; }

.taskbar { height: 40px; background: linear-gradient(90deg, #151311 0, #0f0e0b 35%, #13130e 60%, #1c1a16 100%); display: flex; }
.tk { width: 49px; display: grid; place-items: center; padding-bottom: 1px; }
.tk:nth-child(-n+2) { width: 48px; }
.tk:nth-child(3) { width: 47px; }
.tk:nth-child(4) { width: 53px; padding-left: 2px; }
.act { width: 48px; background: #3c3c3a; border-bottom: 2px solid #9ccbf2; }
.ps-badge.big { width: 21px; height: 21px; font-size: 11.500px; line-height: 19px; border-radius: 4px; margin-top: 3px; }
.run { background: linear-gradient(#9ccbf2, #9ccbf2) 50% 100% / 40px 2px no-repeat; }
.cc { width: 21px; height: 21px; border-radius: 4px; display: grid; place-items: center; background: conic-gradient(from 0deg, #ffb300, #ffe600, #58d33a, #1fb6ea, #7a4be0, #e22bbd, #f6352e, #ff7b1c, #ffb300); }
.cc svg { background: radial-gradient(#ef5a3c 45%, transparent 75%); }
.tray { margin-left: auto; display: grid; grid-template-columns: 22px 24px 27px 25px 26px 81px 35px 6px; align-items: center; color: #fff; font-size: 11.500px; letter-spacing: -.5px; }
.clock { display: flex; flex-direction: column; align-items: center; line-height: 18px; width: 70px; }
.tray > i { width: 1px; height: 40px; background: #777; }
```
FILE: ramp.js
```js
// Colour spectrum: each column fades white -> hue -> near black.
// Stop: [x position, r, g, b, height at which the hue is pure]
const stops = [
  [0, 230, 20, 30, .5], [.08, 243, 130, 10, .47], [.165, 255, 237, 0, .49], [.24, 190, 205, 0, .5],
  [.29, 95, 172, 30, .5], [.31, 10, 160, 50, .46], [.335, 0, 160, 70, .39], [.41, 0, 165, 150, .37],
  [.495, 0, 174, 239, .35], [.56, 0, 125, 200, .39], [.625, 0, 75, 155, .46], [.64, 15, 60, 145, .5],
  [.68, 45, 36, 132, .5], [.76, 140, 15, 125, .5], [.83, 229, 0, 126, .49], [.92, 226, 0, 75, .5], [1, 226, 0, 26, .5]
];
const el = document.getElementById('ramp');
const ctx = el.getContext('2d');
for (let x = 0; x < el.width; x++) {
  const t = x / (el.width - 1);
  let k = 1;
  while (k < stops.length - 1 && stops[k][0] < t) k++;
  const a = stops[k - 1], b = stops[k], f = (t - a[0]) / (b[0] - a[0]);
  const v = a.map((n, i) => n + (b[i] - n) * f);
  const rgb = s => `rgb(${v[1] * s},${v[2] * s},${v[3] * s})`;
  const g = ctx.createLinearGradient(0, 0, 0, el.height);
  g.addColorStop(0, '#fff');
  g.addColorStop(v[4], rgb(1));
  g.addColorStop(.55, rgb(.93));
  g.addColorStop(1, rgb(.12));
  ctx.fillStyle = g;
  ctx.fillRect(x, 0, 1, el.height);
}
```
